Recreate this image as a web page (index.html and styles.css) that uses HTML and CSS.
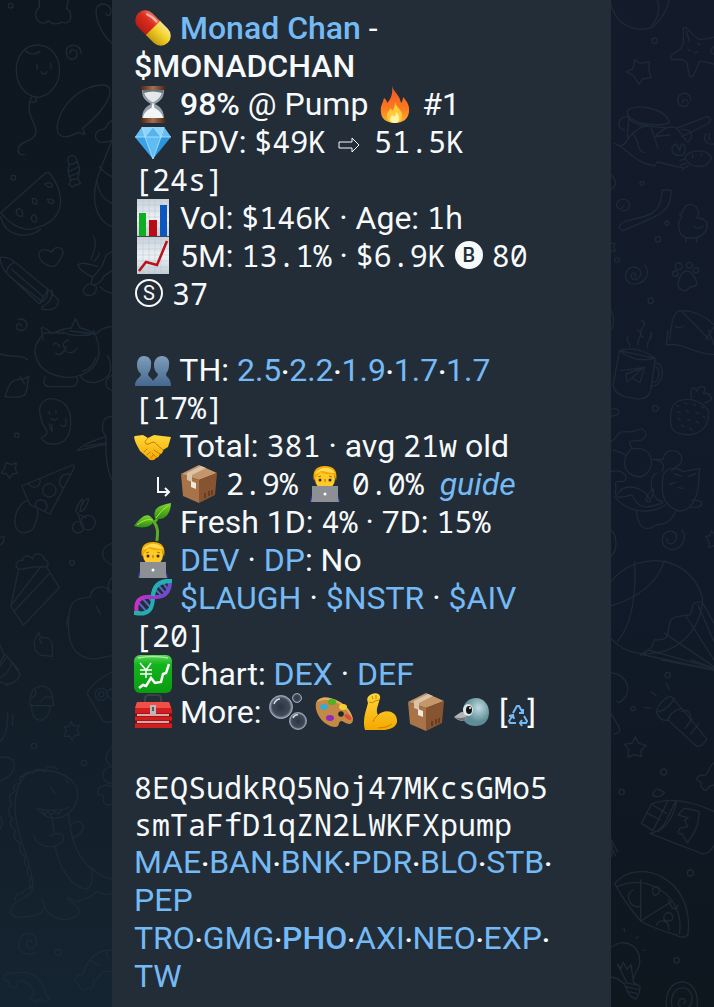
FILE: index.html
```html
<!DOCTYPE html>
<html lang="en">
<head>
    <meta charset="UTF-8">
    <meta name="viewport" content="width=device-width, initial-scale=1.0">
    <title>Monad Chan - $MONADCHAN</title>
    <link rel="stylesheet" href="styles.css">
</head>
<body>
    <!-- Emoji shared by the message rows -->
    <svg class="sprite" aria-hidden="true">
        <defs>
            <linearGradient id="gRed" x1="0" y1="0" x2="0" y2="1"><stop offset="0" stop-color="#f0705a"/><stop offset=".4" stop-color="#d92d1f"/><stop offset="1" stop-color="#b81c12"/></linearGradient>
            <linearGradient id="gYellow" x1="0" y1="0" x2="0" y2="1"><stop offset="0" stop-color="#f8e48a"/><stop offset=".4" stop-color="#f3d32c"/><stop offset="1" stop-color="#c79d0c"/></linearGradient>
            <linearGradient id="gFire" x1="0" y1="0" x2="0" y2="1"><stop offset="0" stop-color="#f0532a"/><stop offset=".6" stop-color="#fb7a1e"/><stop offset="1" stop-color="#ffb02e"/></linearGradient>
            <linearGradient id="gWood" x1="0" y1="0" x2="1" y2="0"><stop offset="0" stop-color="#3f2418"/><stop offset=".5" stop-color="#a86f50"/><stop offset="1" stop-color="#3f2418"/></linearGradient>
            <linearGradient id="gPaper" x1="0" y1="0" x2="0" y2="1"><stop offset="0" stop-color="#c7d0d9"/><stop offset=".5" stop-color="#eef2f5"/><stop offset="1" stop-color="#c3ccd5"/></linearGradient>
            <linearGradient id="gPeople" x1="0" y1="0" x2="0" y2="1"><stop offset="0" stop-color="#7f9dbb"/><stop offset="1" stop-color="#46688f"/></linearGradient>
            <linearGradient id="gSkin" x1="0" y1="0" x2="0" y2="1"><stop offset="0" stop-color="#ffd83b"/><stop offset="1" stop-color="#f5a800"/></linearGradient>
            <linearGradient id="gLeaf" x1="0" y1="0" x2="0" y2="1"><stop offset="0" stop-color="#7ed42d"/><stop offset="1" stop-color="#2f8c12"/></linearGradient>
            <linearGradient id="gGreen" x1="0" y1="0" x2="0" y2="1"><stop offset="0" stop-color="#5fd35a"/><stop offset=".25" stop-color="#12b51c"/><stop offset="1" stop-color="#0a9a12"/></linearGradient>
            <linearGradient id="gHelix" x1="0" y1="0" x2="1" y2="0"><stop offset="0" stop-color="#d02fc6"/><stop offset=".5" stop-color="#9c35cf"/><stop offset="1" stop-color="#6a4fd0"/></linearGradient>
            <radialGradient id="gBubble"><stop offset="0" stop-color="#2b3542"/><stop offset=".75" stop-color="#3f4958"/><stop offset="1" stop-color="#9fa3b6"/></radialGradient>
            <radialGradient id="gBird" cx=".6" cy=".35"><stop offset="0" stop-color="#bfdbe0"/><stop offset="1" stop-color="#5f8d96"/></radialGradient>
        </defs>
        <symbol id="pill" viewBox="0 0 38 38">
            <g transform="rotate(45 19 19)">
                <path d="M20 9H8a10 10 0 0 0 0 20h12z" fill="url(#gRed)"/>
                <path d="M19 9h11a10 10 0 0 1 0 20H19z" fill="url(#gYellow)"/>
                <path d="M5 13.500Q11 11 17 12" stroke="#fbb5a8" stroke-width="2" fill="none" stroke-linecap="round"/>
            </g>
        </symbol>
        <symbol id="hourglass" viewBox="0 0 38 38">
            <path d="M8 4h22c0 8-2 11-9 15 6 3 9 7 9 15H8c0-8 3-12 9-15C10 15 8 12 8 4z" fill="#93a0a8"/>
            <path d="M9 5h20c0 5-3 9-9 12h-2C12 14 9 10 9 5z" fill="#66757e"/>
            <path d="M10 8q9-3 18 0-2 6-8 9h-2q-6-3-8-9z" fill="#e5e7e8"/>
            <path d="M18.500 18h1l1 5c4 2 8 5 8.500 10H9c.5-5 4-8 8.500-10z" fill="#f4f5f5"/>
            <rect x="6" y="1" width="26" height="4" rx="1.500" fill="url(#gWood)"/>
            <rect x="6" y="33" width="26" height="5" rx="1.500" fill="url(#gWood)"/>
        </symbol>
        <symbol id="fire" viewBox="0 0 38 38">
            <path d="M16 1c1 5 8 9 9 17 1-1 2-4 2-6 4 4 7 9 6 15-1 7-6 11-14 11S5 34 5 27c-1-6 2-9 3-14 2 1 3 3 3 5 4-4 6-9 5-17z" fill="url(#gFire)"/>
            <path d="M19 17c1 5 6 7 7 12 1 5-2 9-7 9s-9-3-8-9c1-3 3-3 3-6 1 1 2 2 2 3 2-2 3-5 3-9z" fill="#ffc93a"/>
            <path d="M20 27c4 3 5 11-1 11s-6-5-3-8c1 1 2 1 2 2 1-1 2-3 2-5z" fill="#fff3a6"/>
        </symbol>
        <symbol id="gem" viewBox="0 0 38 38">
            <path d="M8 4h22l7 10-18 22L1 14z" fill="#2c95dc"/>
            <path d="M8 4 1 14h10zM30 4l7 10H27z" fill="#68bdf0"/>
            <path d="M8 4h11l-8 10zM30 4H19l8 10z" fill="#8fd4fa"/>
            <path d="M19 4l8 10H11z" fill="#55b3ee"/>
            <path d="M11 14h16l-8 22z" fill="#5fbdf4"/>
            <path d="M1 14h10l8 22z" fill="#3aa2e8"/>
            <path d="M1 14h36M8 4l3 10 8 22 8-22 3-10M11 14l8-10 8 10" stroke="#b5e4ff" stroke-width=".8" fill="none"/>
        </symbol>
        <symbol id="bars" viewBox="0 0 38 38">
            <path d="M3 0h32v38H3z" fill="url(#gPaper)"/>
            <path d="M3 6h32M3 12h32M3 18h32M3 24h32M3 30h32M9 0v38M15 0v38M21 0v38M27 0v38" stroke="#b7c6d2" stroke-width=".5"/>
            <path d="M5 14h7v23H5z" fill="#0fae20"/>
            <path d="M15 21h8v16h-8z" fill="#b90d15"/>
            <path d="M26 6h7v31h-7z" fill="#0b57bd"/>
            <path d="M3 37.500h32" stroke="#404a52"/>
        </symbol>
        <symbol id="trend" viewBox="0 0 38 38">
            <path d="M3 0h32v37H3z" fill="url(#gPaper)"/>
            <path d="M3 6h32M3 12h32M3 18h32M3 24h32M3 30h32M9 0v37M15 0v37M21 0v37M27 0v37" stroke="#b7c6d2" stroke-width=".5"/>
            <path d="m5 34 7-9 11 3L33 4" stroke="#bb1218" stroke-width="2.500" fill="none"/>
        </symbol>
        <symbol id="people" viewBox="0 0 38 38">
            <path d="M10 5c5 0 8 4 7 9 0 5-2 7-3 9 0 4 6 3 6 12H1c0-8 6-8 6-12-2-2-4-4-4-9 0-5 2-9 7-9z" fill="url(#gPeople)"/>
            <path d="M28 5c5 0 8 4 7 9 0 5-2 7-3 9 0 4 5 3 5 12H18c0-8 6-8 6-12-2-2-4-4-4-9 0-5 3-9 8-9z" fill="url(#gPeople)"/>
        </symbol>
        <symbol id="handshake" viewBox="0 0 38 38">
            <path d="M1 9l8-1 5 3 6-3 8 1 9 1-3 10-5 3c0 2-1 4-3 4-1 3-3 4-4 4-2 3-6 3-8 0l-8-7C4 20 1 16 0 10z" fill="url(#gSkin)"/>
            <path d="M14 11c-2 2-4 4-2 6 3 1 5-2 8-2l9 8M10 25l3-3M13 28l3-3M17 31l2-3M20 23l6 4M18 26l4 4" stroke="#c57f00" stroke-width="1" fill="none" stroke-linecap="round"/>
        </symbol>
        <symbol id="package" viewBox="0 0 38 38">
            <path d="M19 0 37 8 19 15 1 9z" fill="#c59668"/>
            <path d="M1 9l18 6v23L3 31z" fill="#a87447"/>
            <path d="M37 8 19 15v23l16-8z" fill="#865431"/>
            <path d="M14 2l5-2 4 2-11 4 7 9v6l-6-2v-7L7 6z" fill="none"/>
            <path d="M21 1l5 2-14 7v7l-5-2V8z" fill="#d9c3aa"/>
            <path d="M11 16l5 2v6l-5-2z" fill="#eee8de"/>
            <path d="M25 28v5m4-7v5m3-6v5" stroke="#5d351d" stroke-width="1.500"/>
        </symbol>
        <symbol id="coder" viewBox="0 0 38 38">
            <path d="M4 37c0-8 4-11 15-11s14 3 15 11z" fill="#3636a0"/>
            <ellipse cx="19" cy="14" rx="10" ry="11" fill="#ffc928"/>
            <path d="M8 16C6 6 10 1 19 1s13 5 11 15c-1-4-1-6-3-7-6 1-11-1-13-2-1 4-4 3-6 9z" fill="#f2ab00"/>
            <path d="M9 9C12 2 24 0 29 8c-6 0-11-2-14-2-2 2-4 2-6 3z" fill="#ffdb54"/>
            <path d="M12 12l3-1m8 0 3 1M19 14v3" stroke="#a96800" fill="none"/>
            <circle cx="14" cy="15" r="1.500" fill="#38280d"/><circle cx="24" cy="15" r="1.500" fill="#38280d"/>
            <path d="M6 21h26v12l1 4H5l1-4z" fill="#8c8f94"/>
            <circle cx="19" cy="29" r="1.500" fill="#fff"/>
        </symbol>
        <symbol id="seedling" viewBox="0 0 38 38">
            <path d="M23 37c1-8 1-13-3-18 4-2 2-3 4-6" stroke="#59ad20" stroke-width="3" fill="none" stroke-linecap="round"/>
            <path d="M20 18C15 8 8 12 0 23c6 2 16 3 20-5z" fill="url(#gLeaf)"/>
            <path d="M21 16C18 4 27 2 37 0c0 9-5 18-16 16z" fill="url(#gLeaf)"/>
            <path d="M3 22q8-7 16-5M22 15Q27 7 35 2" stroke="#a5e64d" fill="none"/>
        </symbol>
        <symbol id="dna" viewBox="0 0 38 38">
            <path d="M5 24l8 9M9 20l8 9M14 18l4 5M22 11l5 5M24 6l8 9M29 4l5 7" stroke="#5566c0" stroke-width="2"/>
            <path d="M1 34C16 37 19 28 19 18S24 1 37 2" stroke="#25aeb2" stroke-width="4" fill="none"/>
            <path d="M3 34C0 20 8 17 19 18S36 14 36 2" stroke="url(#gHelix)" stroke-width="4" fill="none"/>
            <path d="M19 17C20 6 26 2 38 2M0 34h6" stroke="#25aeb2" stroke-width="4" fill="none"/>
        </symbol>
        <symbol id="yen" viewBox="0 0 38 38">
            <rect x="0" y="0" width="38" height="38" rx="6" fill="url(#gGreen)"/>
            <path d="M4 3Q19 0 34 3" stroke="#a5eda0" stroke-width="1.500" fill="none"/>
            <path d="m6 8 6 7 5-7M12 15v8M6 15h12M6 19h12" stroke="#fff" stroke-width="1.500" fill="none"/>
            <path d="m5 33 4-3 3 1 5-8 4 5 6-1 2-8 3-1 3-9" stroke="#fff" stroke-width="2.500" fill="none"/>
        </symbol>
        <symbol id="toolbox" viewBox="0 0 38 38">
            <path d="M11 12V5q1-3 4-3h8q4 0 4 3v7" stroke="#3d4045" stroke-width="2" fill="none"/>
            <path d="M3 9h32l3 8v18H1V17z" fill="#cf1f1e"/>
            <path d="M3 9h32l2 6H1z" fill="#f05048"/>
            <path d="M1 22h37M1 29h37" stroke="#7a0e10" stroke-width="3"/>
            <path d="M3 22h32M3 29h32" stroke="#f6dcd9" stroke-width="1.500"/>
            <path d="M16 12h6v9h-6z" fill="#b7b9bb"/><path d="M18 14h2v4h-2z" fill="#55585c"/>
        </symbol>
        <symbol id="bubbles" viewBox="0 0 38 38">
            <g fill="url(#gBubble)" stroke="#aeb8c9" stroke-width=".7">
                <circle cx="12" cy="14" r="11.500"/><circle cx="28" cy="5" r="4.500"/><circle cx="29" cy="28" r="8.500"/>
            </g>
            <path d="M5 11q2-5 6-5M24 25q2-4 5-3" stroke="#d9dee8" stroke-width="1.500" fill="none"/>
        </symbol>
        <symbol id="palette" viewBox="0 0 38 38">
            <path d="M1 10C4 3 14 3 23 8c9 4 14 12 15 19-1 7-7 3-11 1-5 0-1 6-7 6C8 33-1 19 1 10z" fill="#c48a45"/>
            <path d="M1 10C4 3 14 3 23 8c9 4 14 12 15 19C33 15 22 8 12 7 6 7 3 8 1 10z" fill="#e0ad66"/>
            <ellipse cx="9" cy="14" rx="4" ry="3" fill="#38a9d0"/><ellipse cx="17" cy="9" rx="4" ry="3" fill="#49b51b"/>
            <ellipse cx="28" cy="14" rx="4" ry="3" fill="#f2d12d"/><ellipse cx="15" cy="25" rx="4" ry="3" fill="#9128c0"/>
            <ellipse cx="33" cy="24" rx="4" ry="2" fill="#df4a38" transform="rotate(35 33 24)"/><circle cx="26" cy="21" r="2.800" fill="#25262c"/>
        </symbol>
        <symbol id="muscle" viewBox="0 0 38 38">
            <path d="M11 1c4-2 9 0 8 4l-2 7c-2 6-1 8 0 10 7-7 20-4 19 7-1 6-9 8-14 8H4C1 27 5 18 7 10 5 5 7 3 11 1z" fill="url(#gSkin)"/>
            <path d="M8 9q4 2 6-1l4-1M11 3l1 3M15 2v4M17 22q-4 3-5 7M17 35q9 0 14-4" stroke="#c88400" fill="none"/>
        </symbol>
        <symbol id="bird" viewBox="0 0 38 38">
            <path d="M10 20C9 10 16 5 23 5c8 0 13 7 13 14 0 10-6 14-14 14-6 0-10-3-12-7z" fill="url(#gBird)"/>
            <path d="M1 24c4-3 6-5 9-5q4 2 3 7C10 29 5 28 1 24z" fill="#b4b5b8"/>
            <path d="M1 24q6 2 12 0-1 7-12 0z" fill="#6d7376"/>
            <ellipse cx="15" cy="17" rx="5" ry="6" fill="#dfe7e8"/><ellipse cx="16" cy="17" rx="3" ry="4" fill="#141414"/><circle cx="17" cy="15" r="1" fill="#fff"/>
        </symbol>
    </svg>

    <div class="chat">
        <!-- Wallpaper doodles, left side -->
        <svg class="wallpaper left" viewBox="0 0 336 3021" preserveAspectRatio="xMinYMin slice" aria-hidden="true">
            <g>
                <circle cx="32" cy="17" r="7"/><circle cx="40" cy="533" r="7"/>
                <path d="M118 0v22c-15 8-15 40 5 46 8 3 18 0 22-6 10 12 30 12 40 4 15 8 28-2 27-18 0-12-5-20-13-22l6-26"/>
                <path d="M336 130c-30-25-56-80-45-108 15-20 48-6 40 20-4 8-14 4-12-3"/>
                <path d="M114 135c85 3 88 145-2 157C25 280 30 133 114 135zM76 152q20 18 44 3M110 192q2 9 2 16M151 190q4 8 1 15M122 215q11 14 20 0M96 290l-9 17 22-2-2-15M90 306c-15 40 30 75 15 100-13 22-45 15-50 40-3 15 8 20 18 18"/>
                <path d="M243 160c0-36-54-30-43 4 10 24 38 12 30-8-6-11-22-8-20 4"/>
                <path d="M314 255c36 10 10 68-66 130l6 18-20-6c-35 20-66 20-62-22 10-60 70-122 142-120zM336 362c-20 8-12 25-30 27-24 0-28 36 0 38l30-4"/>
                <path d="M209 494c-14-16 0-27 8-28 10 0 14 14 14 18-5 5-12 10-22 10zM207 496q-7 20 5 44l20-4q13-30-1-50zM205 515l30-14M208 530l30-13M212 540l-5 14 10 7 9-6 16-4-8-14"/>
                <path d="M2 638 130 525q15-15 25 3c48 70 28 130-35 152C80 700 35 680 2 638zm0 12c15 65 85 65 120 38"/>
                <path d="M134 552q15-8 24 3-4 16-24-3zM97 596q15-4 14 15-15 5-14-15zM142 598q16-3 20 8-12 12-20-8zM50 630c10-12 22 5 16 20-14-2-20-8-16-20zM98 645c12-6 16 24 5 22-10-4-12-14-5-22z"/>
                <path d="M336 420c-30 80-60 130-51 190 7 40 25 60 51 70M298 500q15 20 38 30M290 540q8 55 46 70"/>
                <path d="M155 757c8-20 36-18 34 3-6 16-13 30-27 40-24 0-44-18-45-35 0-20 24-20 38-8z"/>
                <path d="M0 772q22-4 45 15l100 82-27 42L20 820Q2 800 0 772zM41 788q-20 10-22 32M35 808l95 82M30 830l90 70M145 869l30 30q0 38-50 28M140 870q12 20-22 41M155 868q10 30-30 54"/>
                <path d="M280 708q12 20 0 50l-7 20M298 758q-4 18-16 25M276 830c-24-10-42-28-42-36 15-10 32 0 60 5M305 800l-15 18q-20 20-15 35 20 5 35-20M275 852c-22-2-34 25-16 33 25 6 30-12 31-24l-16-9M305 800l14-35 17-10M310 830l26-18M300 860q20 20 36 18"/>
                <path d="M54 958c22-5 36 15 20 30-14 8-28 0-24-12 4-8 14-5 14 2M129 1020l-5-36q10-5 30 17 35-15 60-17l12-28 14 28q30 6 45 20 25-25 51-24M190 995q10 15 80 10"/>
            </g>
            <g transform="translate(0 990)">
                <path d="M130 10c-15 22-30 40-24 65 12 50 60 65 100 68 50-4 85-30 91-70 0-25-5-50-17-73M130 10q30-5 60 0M210 3l72 9M160 45q8-14 19 5M205 30q-20 5-13 22 12-6 0 10-10 18-25 8M195 62q20 15 36-7M135 140c-8 20 0 30 14 30h65c18-3 23-18 15-30M242 135c5 35 85 30 90-20 0-12-5-30-10-38M288 82q-10 32-40 42M336 135c-26 15-22 40 0 46"/>
                <path d="M0 72c40 14 50-3 82 16M15 200c10-30 15-52 45-52q15 0 26-10c-10 50 8 70-71 62zM74 162l-14-22"/>
                <path d="M137 210c25-12 70 5 74 50 6 55-15 85-55 82-18 0-28-8-33-20 24-5 20-20 5-40-12-35-15-60 9-72zM148 244v8M168 242v7M152 265q12 10 20 0M147 282q8 25 10 20 0-8-2-18M182 285q20 15 15-20"/>
                <circle cx="50" cy="316" r="7"/><circle cx="216" cy="698" r="7"/><circle cx="148" cy="481" r="20"/>
                <path d="M336 260c-32-4-35 40-18 60v50q5 60 18 80M318 320c-50 15-75 28-86 42l88-20M255 350l64-12"/>
                <path d="M18 397l16 7 15-5-3 18 6 12-15 3-8 14-9-14-16-2 9-14z"/>
                <path d="M65 468 210 408q18-10 10 10l-70 134-60-28zM83 460c18 20 40 12 37-14M208 432c-33-2-37 35-18 42M107 530c-6-28 36-28 34 2l-7 12M80 512c-30 15-40 52-33 78 6 26 50 22 57-4 8-22 12-38 8-48"/>
                <circle cx="264" cy="578" r="22"/><circle cx="234" cy="592" r="17"/>
                <path d="M240 572q-3-20-13-30 5-20 20-35l3 15M240 545c10 0 25-20 26-40-18 5-25 20-25 38zM240 555l17 8M0 623l12-5-2 20-10 6"/>
                <path d="M60 718c-22-3-10-32 8-26-4-15 20-20 30-5 2-25 38-15 34 2 18 0 14 22 2 22-25-5-50 5-74 7zM56 718 32 828l38 58L178 773l-38-62M32 828l88-115M40 846l108-115"/>
                <path d="M114 912c-18 20-15 55 12 64l31 3V948c-2-25-20-27-30-24-10-4-10-14-10-18M117 925l8 15"/>
                <path d="M336 640c-35 10-40 48 0 65M336 788c-20-26-60-24-66 14-70 0-60 40-65 80 0 50 10 103 80 105l51-10M288 828l14 25M325 788q-3-35 11-45M205 860q-4 12-5 24M0 945c5 10 10 30 12 25l45 50M0 1000l12-24M0 1010l18-26"/>
            </g>
            <g transform="translate(0 1980)">
                <path d="M30 0l30 42q-3 22-38 33L0 65M36 5q-8 35-36 48M57 48q-10 25-37 24M90 115c5-50 65-48 68 0l3 22H90zM95 133c-5 60 50 65 56 5M92 112q20 0 14-24M123 125q8-20 36-12"/>
                <path d="M213 184l8 14 17-2-7 15 8 14-14 1-8 14-9-12-18 1 10-14-7-15 14 1z"/>
                <circle cx="102" cy="258" r="8"/><circle cx="252" cy="309" r="8"/><circle cx="175" cy="877" r="9"/><circle cx="304" cy="103" r="18"/><circle cx="304" cy="103" r="8"/>
                <path d="M336 36c-40 22-70 45-74 65l42 75q10 18 32 8M325 92q20-15 20 15-15 20-20 0M336 260c-22 22-25 45 0 60M336 320c-35 0-38 50 0 50M336 380c-20-10-50 0-42 25 8 0 14-2 16 4-5 20 12 34 26 22M0 245q26-25 23-88M38 165v32M0 292c60-10 55 55 0 70M0 465q12 20 0 45"/>
                <path d="M76 345c50-30 125-8 150 30 15 30 3 65-20 85-35 25-75 15-95-15 35 8 65 10 98-4M128 450l4 14 12-10 8 12 14-12 8 9 14-16M76 345c-50 60-30 145-6 215 15 50 30 85 28 125-5 30-50 25-68 65 0 25 35 23 55 19 30-3 45-12 45-25"/>
                <path d="M70 350c-15-10-10 15-8 20-20 0-25 10-18 25-20 5-18 28-8 40-15 10-12 30 2 42-15 10-5 28 10 35-12 10-3 35 15 37-10 18 0 35 12 40-5 15 0 28 10 35-8 12 0 25 8 30-10 12-5 22 4 30-15-3-25 5-28 16-15-3-25 5-24 20M66 352c5-15 25-20 32-12 5-15 30-15 34-4 5-20 30-18 40-8"/>
                <path d="M152 383l13 16M196 358l10 11M102 527c10 40 70 42 88 15 6-25-20-25-40-15M162 520l-6-50M206 460c5 90 30 130 70 170 5 70-22 65-55 40-30-30-45-60-55-108M212 495c25-25 50 0 32 20-7 10-15 20-30 15M276 625c20 20 40 30 60 32M206 712l18 14c30-5 55-20 68-32q20 15 44 6M126 715c15 75 80 70 108 50 15-25-15-28-34-50"/>
                <path d="M108 878c-25 10-62 0-50-37 10-35 62-20 50 12-8 20-35 12-28-6 4-8 14-8 16 0M10 952c5-20 30-12 32-12 45-12 88 15 92 58 15 12 15 28 0 28-15-4-15-14-24-2-16 4-20-15-7-25-10-25-25-40-50-35-3 15-5 25-20 18-8-8-4-15-8-18-10 0-16-6-15-12zM336 870c-50 0-75 30-87 72-22 5-35 25-12 28 0 20 15 25 24 12 15 10 22-2 20-22 20 5 10-35 55-25M272 900q15 15 32 15M316 870l8 25"/>
            </g>
        </svg>

        <main class="message">
            <p class="row"><svg class="emoji"><use href="#pill"/></svg> <a href="#" class="strong">Monad Chan</a> -</p>
            <p class="row strong">$MONADCHAN</p>
            <p class="row"><svg class="emoji"><use href="#hourglass"/></svg> <b>98%</b> @ Pump <svg class="emoji"><use href="#fire"/></svg> #1</p>
            <p class="row"><svg class="emoji"><use href="#gem"/></svg> FDV: <code>$49K</code> <svg class="arrow" viewBox="0 0 32 38"><path d="M5 19h13v-4l7 7-7 7v-4H5z"/></svg> <code>51.5K</code></p>
            <p class="row"><code>[24s]</code></p>
            <p class="row"><svg class="emoji"><use href="#bars"/></svg> Vol: <code>$146K</code> · Age: <code>1h</code></p>
            <p class="row"><svg class="emoji"><use href="#trend"/></svg> 5M: <code>13.1%</code> · <code>$6.9K</code> <span class="badge filled">B</span> <code>80</code></p>
            <p class="row"><span class="badge">S</span> <code>37</code></p>

            <p class="row gap"><svg class="emoji"><use href="#people"/></svg> TH: <a href="#">2.5</a><span class="dot">·</span><a href="#">2.2</a><span class="dot">·</span><a href="#">1.9</a><span class="dot">·</span><a href="#">1.7</a><span class="dot">·</span><a href="#">1.7</a></p>
            <p class="row"><code>[17%]</code></p>
            <p class="row"><svg class="emoji"><use href="#handshake"/></svg> Total: <code>381</code> · avg <code>21w</code> old</p>
            <p class="row indent"><svg class="corner" viewBox="0 0 16 38"><path d="M2 12v15h11M9 23l4 4-4 4"/></svg> <svg class="emoji"><use href="#package"/></svg> <code>2.9%</code> <svg class="emoji"><use href="#coder"/></svg> <code>0.0%</code> &nbsp;<a href="#" class="guide">guide</a></p>
            <p class="row"><svg class="emoji"><use href="#seedling"/></svg> Fresh 1D: <code>4%</code> · 7D: <code>15%</code></p>
            <p class="row"><svg class="emoji"><use href="#coder"/></svg> <a href="#">DEV</a> · <a href="#">DP</a>: No</p>
            <p class="row"><svg class="emoji"><use href="#dna"/></svg> <a href="#">$LAUGH</a> · <a href="#">$NSTR</a> · <a href="#">$AIV</a></p>
            <p class="row"><code>[20]</code></p>
            <p class="row"><svg class="emoji"><use href="#yen"/></svg> Chart: <a href="#">DEX</a> · <a href="#">DEF</a></p>
            <p class="row"><svg class="emoji"><use href="#toolbox"/></svg> More: <svg class="emoji"><use href="#bubbles"/></svg> <svg class="emoji"><use href="#palette"/></svg> <svg class="emoji"><use href="#muscle"/></svg> <svg class="emoji"><use href="#package"/></svg> <svg class="emoji"><use href="#bird"/></svg> [<a href="#" aria-label="Refresh"><svg class="recycle" viewBox="0 0 20 38"><path d="M5 20l4-7h2l4 7M15 16v4h-4M16 23l3 5-1 2h-6M14 27l-2 3 2 3M8 30H2l-1-2 4-6M1 23l4-1 1 4"/></svg></a>]</p>

            <p class="address">8EQSudkRQ5Noj47MKcsGMo5<br>smTaFfD1qZN2LWKFXpump</p>
            <p class="row"><a href="#">MAE</a><span class="dot">·</span><a href="#">BAN</a><span class="dot">·</span><a href="#">BNK</a><span class="dot">·</span><a href="#">PDR</a><span class="dot">·</span><a href="#">BLO</a><span class="dot">·</span><a href="#">STB</a><span class="dot">·</span><br><a href="#">PEP</a></p>
            <p class="row"><a href="#">TRO</a><span class="dot">·</span><a href="#">GMG</a><span class="dot">·</span><a href="#" class="strong">PHO</a><span class="dot">·</span><a href="#">AXI</a><span class="dot">·</span><a href="#">NEO</a><span class="dot">·</span><a href="#">EXP</a><span class="dot">·</span><br><a href="#">TW</a></p>
        </main>

        <!-- Wallpaper doodles, right side -->
        <svg class="wallpaper right" viewBox="9 0 309 3021" preserveAspectRatio="xMinYMin slice" aria-hidden="true">
            <g>
                <path d="M9 15c25 85 110 80 130 62 25-25 40-50 45-77M148 0c12 35-5 65-18 78"/>
                <circle cx="140" cy="122" r="8"/><circle cx="102" cy="550" r="6"/><circle cx="177" cy="669" r="6"/><circle cx="150" cy="718" r="8"/><circle cx="27" cy="780" r="7"/><circle cx="128" cy="902" r="8"/>
                <path d="M226 84c10-8 25 22 48 34 20 0 30-4 44-6M226 84c0 35 5 50-12 66-30 15-30 28-20 29 35-2 40 0 44 15 5 40 12 42 18 32 15-25 15-50 28-42l34 8M318 140q-20 15 0 22M235 95l10 30M240 148l8 5M268 130l8 5M258 155q6 8 12 0"/>
                <path d="M80 178l16 12 28-5-1 26 6 22-26 4-10 16-16-26-22-12 20-9zM248 300c0-35-55-20-35 12 15 15 35 4 25-10-6-8-18-2-14 6"/>
                <path d="M57 335c15-30 120-10 127 32-25 15-120 10-127-32zM57 335l5 20c15 22 60 25 110 28M60 350c-30 0-38 30-10 42M62 355l-4 55M20 430c18 15 30 6 42-18q32-35 70-40M20 430c35 12 60 60 120 68l8-12 78 18M75 403c20 20 10 50 35 55M130 385l20 60M142 410q35-40 65-25l30 40M140 410l45-5M205 385l92-35c20 5 8 20-5 25l-70 35M220 388c40 0 35 20 20 40"/>
                <path d="M205 432c-22 5-15 35 12 35 22-5 15-40 3-35l-5 20zM296 402c-15 5-5 35 22 30M304 400v20M230 475c10-30 75-30 80 0-15 35-60 30-80 0zM215 482l14-4M218 495l16-5M222 510l20-14M254 465v8M280 460v8"/>
                <path d="M9 525c18 15 18 35 0 42M42 632c30 5 30-40-2-34-30 10-5 45 6 20M162 570h27c6 80-70 85-145 123l-12-11c20-45 130 0 130-112zM9 730h12l-5 12q15 15-7 10"/>
                <path d="M222 650l-8-8 10-5c5-35 48-30 48 5l-5 12c50 0 35 60-15 60-40 5-50-40-30-64M258 678q10 15 28 0M233 715v12M266 715v12"/>
                <path d="M110 794c25 30-10 70-45 55-28-15-5-65 28-42 20 20-20 48-24 20 2-14 20-8 12 3M210 848c5-20 15-35 25-35 20 0 20 15 28 25 8 18-3 25-16 21-15 25-38 10-37-11z"/>
                <circle cx="202" cy="821" r="8"/><circle cx="212" cy="799" r="10"/><circle cx="244" cy="796" r="9"/><circle cx="264" cy="811" r="8"/>
                <path d="M185 1020c5-50 10-90 35-88 40 0 75 20 98 42M220 932l85 88M202 978q10 10 24 0M318 980l-25 40M100 962c30 8-20 30 5 50M130 998l-6 22M9 930c10 20 10 50 0 58"/>
            </g>
            <g transform="translate(0 990)">
                <path d="M60 20c-10 15 8 18 5 28M88 0c25 15-5 25 2 45M130 8c8 15-20 25-10 45M180 0l-5 45c50-10 90 30 143 28M302 0l16 45"/>
                <path d="M35 62 142 85l-15 100q-10 30-60 18-45-5-52-38zM35 62q50-18 107 23-60 15-107-23M140 98c35 0 30 70-10 70M141 110c18 2 15 45-8 48M38 122l72-10-14 46-24-14-16 12-2-24 50-18-32 30"/>
                <circle cx="142" cy="235" r="9"/>
                <path d="M190 240c10-45 80-40 110 0 15 80-85 90-108 55-8-18-4-35-2-55zM250 204c-5-40 10-35 16-20 10-25 35-15 20 5 20 0 40 20 5 30M9 238c28-10 35 20 0 20"/>
                <path d="M205 225l7 4M230 218l7 4M255 222l7 4M280 230l7 4M210 245l7 4M235 242l7 4M265 247l7 4M285 260l7 4M210 265l7 4M240 268l7 4M265 275l7 4M220 285l7 4M245 295l7 4"/>
                <path d="M9 335c20-10 15-30 40-30 35 5 40-10 55-8 20 15 5 35-15 35-30 0-30 5-15 25M70 358c70-20 80 70 25 83-55-5-55-60-25-83zM15 360q20 5 38 15M134 388h32c0-35 55-35 55 0 0 20-25 25-30 35M134 388c40 5 35 25 28 35M9 425c35-10 60 20 35 30-30-5-20 10-20 20-10 45 35 20 50 20M20 500c40 55 120 50 150 25M30 490c20-35 80-15 90 10 20 20-10 20-5 5 20-40 30-35 15 0M75 500c20 45 50 30 88 20M85 540c5 60 30 65 60 45 45-5 50-25 60-45M145 430c-25 10-20 80 20 85"/>
                <path d="M165 440c5-35 50-25 60-15l50-10-3 45c-5 50-25 85-60 83-60-20-50-75-47-103zM252 510c50 0 28 30-5 20M200 432l20 6M185 462l18-5M210 472l16 4M240 440l22-8M222 600c25 35-20 75-50 52-28-35 15-65 33-38 5 30-30 38-28 12M318 610l-8-8-4 15-13 3 10 15v16l15-3M9 600c20 20 20 60 0 80"/>
                <path d="M9 755c80-100 240-80 275 50-5 100-80 175-190 165q-50-5-85-45M80 695c5 100-10 190-52 240M9 828q130-40 160-136M285 815c-50 5-20 10-40 40-30 5-60 0-62 35-5 35-5 40-45 40-5 35-20 25-40 45M285 820l33 60M270 825l48 110M232 855l86 135M170 910l148 100M120 960l198 55M95 972l223 48"/>
            </g>
            <g transform="translate(0 1980)">
                <circle cx="179" cy="45" r="8"/><circle cx="75" cy="146" r="6"/><circle cx="167" cy="336" r="9"/><circle cx="41" cy="396" r="8"/><circle cx="247" cy="639" r="9"/><circle cx="206" cy="901" r="8"/>
                <path d="M160 0l158 30M250 0l68 25M9 38c50 5 70 60 25 90l-8-5M9 160c25 45 40 55 9 62M145 155c5-20 25-45 45-45l30 35q-35 10-40 35-25 5-35-25zM150 155q30-5 50-40M180 180l85 78q15 5 32-20l-75-93M220 155c20-10 32 5 24 20M232 205l20-30M248 222l25-32M130 95l15 12M175 70l8 18M110 142l18 3"/>
                <path d="M82 230l10 20 23 6-16 16 1 18-20-6-20 7 2-22-13-16 24-4zM318 310c-15 5-15 30-25 35-30 0-35 15-15 20 0 25 20 35 25 15l15-5M134 403c10-25 20-15 35-5-10 15-30 15-35 5z"/>
                <path d="M100 490l30-58q75-30 188 22M100 490l35 22 45-90M125 520l155 60q25 5 38-25M130 432l45 28M118 460l40 20M125 520c40-5 50-40 60-60l20-40M150 515q45-30 55-90M210 465l18-20 30 5 15 5c0 50-20 70-35 93M210 465c30 10 40 5 20 15l8 20-22 5c-10 15-5 20 5 15l17 28M9 540l20 35M9 560l14 28M12 540v50"/>
                <path d="M20 670c70-80 240-20 220 155-15 15-35 0-35 0-35-10-70-20-107-42C70 750 40 710 20 670zM28 680C110 640 230 700 215 820M98 660v123l95-60M75 690c-28 15-8 60 25 48M135 685c15-15 35 10 5 22-8-8-8-14-5-22zM170 765c10-20 35 5 20 16-12 5-30 0-20-16zM182 720c10 35 25 30 28 15M145 795c10-20 40-15 38 15"/>
                <path d="M9 862c35-30 90-10 86 50-5 20-20 30-19 55l20 12q0 20-12 38-20-5-28-30l-6-14Q25 950 9 952M52 968l40 8M52 980l38 8M58 994l28 6M55 965 28 912l12 14 5-20 12 22 12-14 8 53M48 805l2 10M90 830l-5 5M110 870l-5 2"/>
                <path d="M175 1041c-10-100 105-100 92 0M192 1041c-15-75 75-75 58-10-15 30-50 10-35-12 15-10 22 5 12 12"/>
            </g>
        </svg>
    </div>
</body>
</html>
```

FILE: styles.css
```css
:root {
    --bubble-color: #222d38;
    --text-color: #f7f9fa;
    --link-color: #75baf5;
    --doodle-color: #1d2a36;
}

* {
    box-sizing: border-box;
    margin: 0;
    padding: 0;
}

body {
    font-family: Roboto, sans-serif;
    font-size: 32px;
    line-height: 38px;
    color: var(--text-color);
    background-color: #101923;
}

.sprite {
    position: absolute;
    width: 0;
    height: 0;
}

.chat {
    display: grid;
    grid-template-columns: 112fr 499fr 103fr;
    min-height: 100vh;
}

/* Wallpaper */
.wallpaper {
    width: 100%;
    height: 100%;
    fill: none;
    stroke: var(--doodle-color);
    stroke-width: 4;
    stroke-linecap: round;
    stroke-linejoin: round;
}

.left {
    background: linear-gradient(#0e171f, #101922 50%, #152431);
}

.right {
    background: linear-gradient(#131b2b, #111a29 55%, #0e161e);
}

/* Message bubble */
.message {
    background-color: var(--bubble-color);
    padding: 9px 22px 12px;
    white-space: nowrap;
}

.gap,
.address {
    margin-top: 38px;
}

.indent {
    padding-left: 22px;
}

a {
    color: var(--link-color);
    text-decoration: none;
}

.strong,
b {
    font-weight: 500;
}

.guide {
    font-style: italic;
}

/* Separator between neighbouring links */
.dot {
    font-size: 26px;
    font-weight: 700;
    line-height: 30px;
}

code,
.address {
    font-family: "Noto Sans Mono", "DejaVu Sans Mono", monospace;
    font-size: 30px;
}

code {
    line-height: 30px;
}

.address {
    line-height: 37px;
}

/* Inline icons */
.emoji {
    width: 38px;
    height: 38px;
    vertical-align: top;
}

.arrow,
.corner,
.recycle {
    height: 38px;
    vertical-align: top;
    fill: none;
    stroke: currentColor;
}

.arrow {
    width: 32px;
}

.corner {
    width: 16px;
    stroke-width: 2;
}

.recycle {
    width: 20px;
    stroke-width: 2;
}

.badge {
    display: inline-block;
    width: 28px;
    height: 28px;
    margin: 4px 1px;
    border: 2px solid var(--text-color);
    border-radius: 50%;
    font-size: 20px;
    line-height: 24px;
    text-align: center;
    vertical-align: top;
}

.filled {
    color: var(--bubble-color);
    background-color: var(--text-color);
    font-weight: 500;
}
```
